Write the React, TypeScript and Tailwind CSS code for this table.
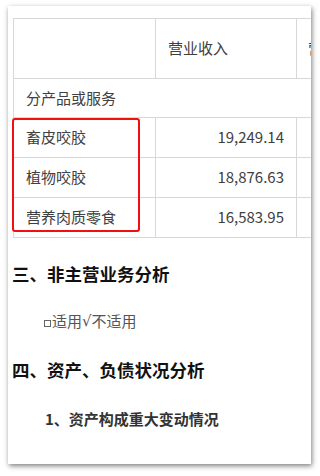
import React from 'react'

const rows = [
  { name: '畜皮咬胶', revenue: '19,249.14' },
  { name: '植物咬胶', revenue: '18,876.63' },
  { name: '营养肉质零食', revenue: '16,583.95' },
]

const font = { fontFamily: '"Noto Sans CJK SC", "Noto Sans", sans-serif' }

export default function App() {
  return (
    <div className="w-[320px] h-[476px] bg-white pt-[6px] pl-[8px]" style={font}>
      <div className="relative w-[303px] h-[458px] bg-white overflow-hidden shadow-[1px_2px_5px_rgba(0,0,0,0.5)]">
        {/* 表格 */}
        <table className="ml-[5px] mt-[12px] border-collapse table-fixed w-[424px] text-[15px] text-[#404040]">
          <colgroup>
            <col className="w-[142px]" />
            <col className="w-[141px]" />
            <col className="w-[141px]" />
          </colgroup>
          <tbody>
            <tr className="h-[60px]">
              <td className="border border-[#d8d8d8]" />
              <td className="border border-[#d8d8d8] px-[12px]">营业收入</td>
              <td className="border border-[#d8d8d8] px-[11px] whitespace-nowrap">营业成本</td>
            </tr>
            <tr className="h-[39px]">
              <td colSpan={3} className="border border-[#d8d8d8] px-[12px]">分产品或服务</td>
            </tr>
            {rows.map((r) => (
              <tr key={r.name} className="h-[40px]">
                <td className="border border-[#d8d8d8] px-[12px] whitespace-nowrap">{r.name}</td>
                <td className="border border-[#d8d8d8] px-[12px] text-right">{r.revenue}</td>
                <td className="border border-[#d8d8d8]" />
              </tr>
            ))}
          </tbody>
        </table>

        {/* 红框标注 */}
        <div className="absolute left-[4px] top-[112px] w-[128px] h-[114px] border-2 border-[#f01010] rounded-[3px]" />

        <div className="mt-[12px] pl-[4px]">
          <div className="h-[48px] flex items-center text-[17.5px] font-bold text-[#111]">三、非主营业务分析</div>
          <div className="h-[47px] flex items-center pl-[32px] text-[15px] text-[#555]">
            <span className="inline-block w-[7px] h-[7px] border border-[#666] mr-[1px] mt-[3px]" />
            适用
            <span style={{ fontFamily: '"DejaVu Sans", sans-serif' }}>√</span>
            不适用
          </div>
          <div className="h-[50px] flex items-center text-[17.5px] font-bold text-[#111]">四、资产、负债状况分析</div>
          <div className="h-[49px] flex items-center pl-[33px] text-[15px] font-bold text-[#333]">1、资产构成重大变动情况</div>
        </div>
      </div>
    </div>
  )
}
